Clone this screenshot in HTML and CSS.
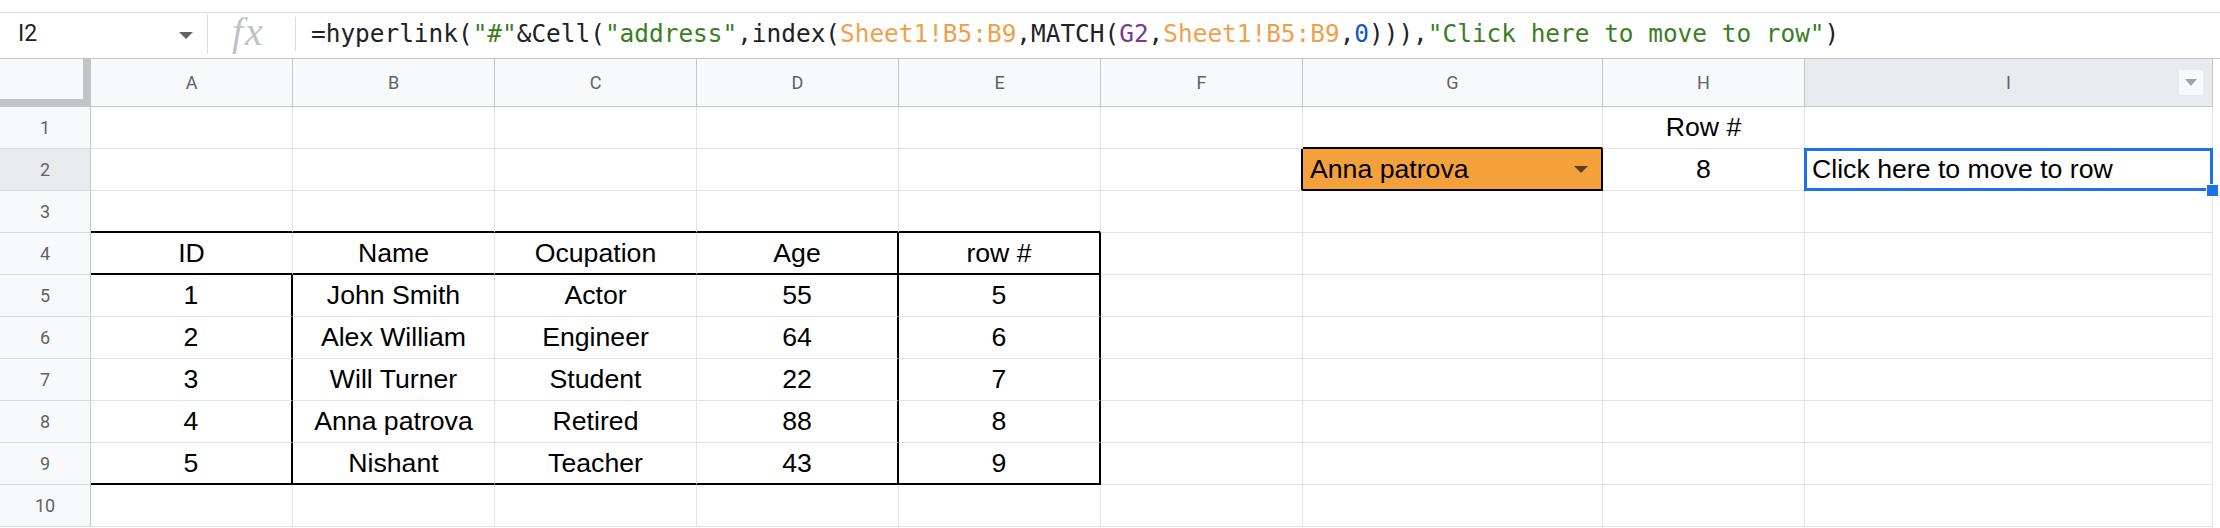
FILE: index.html
```html
<!DOCTYPE html>
<html lang="en">
<head>
    <meta charset="UTF-8">
    <title>Sheet1</title>
    <link rel="stylesheet" href="styles.css">
</head>
<body>
    <div class="top"></div>

    <div class="formula-bar">
        <div class="name-box">
            <span>I2</span>
            <span class="caret"></span>
        </div>
        <div class="fx">fx</div>
        <div class="formula">=hyperlink(<span class="str">"#"</span>&amp;Cell(<span class="str">"address"</span>,index(<span class="rng">Sheet1!B5:B9</span>,MATCH(<span class="ref">G2</span>,<span class="rng">Sheet1!B5:B9</span>,<span class="num">0</span>))),<span class="str">"Click here to move to row"</span>)</div>
    </div>

    <div class="sheet">
        <div class="row head">
            <div class="corner"></div>
            <div class="ch">A</div>
            <div class="ch">B</div>
            <div class="ch">C</div>
            <div class="ch">D</div>
            <div class="ch">E</div>
            <div class="ch">F</div>
            <div class="ch">G</div>
            <div class="ch">H</div>
            <div class="ch sel filter-col">
                <span></span>
                <span>I</span>
                <span class="filter"><i></i></span>
            </div>
            <div class="rest"></div>
        </div>

        <div class="row">
            <div class="rh">1</div>
            <div class="c"></div><div class="c"></div><div class="c"></div><div class="c"></div><div class="c"></div>
            <div class="c"></div>
            <div class="c kb"></div>
            <div class="c ctr">Row #</div>
            <div class="c"></div>
            <div class="rest"></div>
        </div>

        <div class="row">
            <div class="rh sel">2</div>
            <div class="c"></div><div class="c"></div><div class="c"></div><div class="c"></div><div class="c"></div>
            <div class="c kr"></div>
            <div class="c kb kr pick">
                <span>Anna patrova</span>
                <span class="pick-arrow"></span>
            </div>
            <div class="c ctr">8</div>
            <div class="c active">Click here to move to row<span class="handle"></span></div>
            <div class="rest"></div>
        </div>

        <div class="row">
            <div class="rh">3</div>
            <div class="c kb"></div><div class="c kb"></div><div class="c kb"></div><div class="c kb"></div><div class="c kb"></div>
            <div class="c"></div><div class="c"></div><div class="c"></div><div class="c"></div>
            <div class="rest"></div>
        </div>

        <div class="row">
            <div class="rh">4</div>
            <div class="c ctr kb">ID</div>
            <div class="c ctr kb">Name</div>
            <div class="c ctr kb">Ocupation</div>
            <div class="c ctr kb kr">Age</div>
            <div class="c ctr kb kr">row #</div>
            <div class="c"></div><div class="c"></div><div class="c"></div><div class="c"></div>
            <div class="rest"></div>
        </div>

        <div class="row">
            <div class="rh">5</div>
            <div class="c ctr kr">1</div>
            <div class="c ctr">John Smith</div>
            <div class="c ctr">Actor</div>
            <div class="c ctr kr">55</div>
            <div class="c ctr kr">5</div>
            <div class="c"></div><div class="c"></div><div class="c"></div><div class="c"></div>
            <div class="rest"></div>
        </div>

        <div class="row">
            <div class="rh">6</div>
            <div class="c ctr kr">2</div>
            <div class="c ctr">Alex William</div>
            <div class="c ctr">Engineer</div>
            <div class="c ctr kr">64</div>
            <div class="c ctr kr">6</div>
            <div class="c"></div><div class="c"></div><div class="c"></div><div class="c"></div>
            <div class="rest"></div>
        </div>

        <div class="row">
            <div class="rh">7</div>
            <div class="c ctr kr">3</div>
            <div class="c ctr">Will Turner</div>
            <div class="c ctr">Student</div>
            <div class="c ctr kr">22</div>
            <div class="c ctr kr">7</div>
            <div class="c"></div><div class="c"></div><div class="c"></div><div class="c"></div>
            <div class="rest"></div>
        </div>

        <div class="row">
            <div class="rh">8</div>
            <div class="c ctr kr">4</div>
            <div class="c ctr">Anna patrova</div>
            <div class="c ctr">Retired</div>
            <div class="c ctr kr">88</div>
            <div class="c ctr kr">8</div>
            <div class="c"></div><div class="c"></div><div class="c"></div><div class="c"></div>
            <div class="rest"></div>
        </div>

        <div class="row">
            <div class="rh">9</div>
            <div class="c ctr kr kb">5</div>
            <div class="c ctr kb">Nishant</div>
            <div class="c ctr kb">Teacher</div>
            <div class="c ctr kr kb">43</div>
            <div class="c ctr kr kb">9</div>
            <div class="c"></div><div class="c"></div><div class="c"></div><div class="c"></div>
            <div class="rest"></div>
        </div>

        <div class="row">
            <div class="rh">10</div>
            <div class="c"></div><div class="c"></div><div class="c"></div><div class="c"></div><div class="c"></div>
            <div class="c"></div><div class="c"></div><div class="c"></div><div class="c"></div>
            <div class="rest"></div>
        </div>
    </div>
</body>
</html>
```

FILE: styles.css
```css
:root {
    --cols: 91px repeat(6, 202px) 300px 202px 408px 1fr;
    --grid: #e2e3e3;
    --head-line: #c4c7c5;
    --head-bg: #f8f9fa;
    --head-sel: #e8eaed;
    --head-text: #5f6368;
    --blue: #1a73e8;
}

* {
    box-sizing: border-box;
}

body {
    margin: 0;
    background: #fff;
    color: #000;
    font-family: "Liberation Sans", Arial, sans-serif;
    overflow: hidden;
}

.top {
    height: 13px;
    border-bottom: 1px solid #dadce0;
}

/* formula bar */
.formula-bar {
    display: flex;
    align-items: center;
    height: 46px;
    padding-bottom: 4px;
    border-bottom: 1px solid var(--head-line);
}

.name-box {
    display: flex;
    align-items: center;
    justify-content: space-between;
    width: 208px;
    height: 40px;
    padding: 0 14px 0 18px;
    border-right: 1px solid #dadce0;
    font-family: Roboto, "Liberation Sans", sans-serif;
    font-size: 23px;
    color: #202124;
}

.caret {
    width: 0;
    height: 0;
    margin-top: 3px;
    border-left: 7px solid transparent;
    border-right: 7px solid transparent;
    border-top: 7px solid #5f6368;
}

.fx {
    width: 88px;
    height: 34px;
    padding-left: 24px;
    border-right: 1px solid #dadce0;
    font-family: "Liberation Serif", "Times New Roman", serif;
    font-style: italic;
    font-size: 40px;
    line-height: 30px;
    letter-spacing: 2px;
    color: #c0c2c5;
}

.formula {
    padding-left: 15px;
    font-family: "DejaVu Sans Mono", "Liberation Mono", monospace;
    font-size: 24.42px;
    color: #202124;
    white-space: nowrap;
}

.str { color: #3b7d23; }
.rng { color: #f0a04b; }
.ref { color: #7e3794; }
.num { color: #1155cc; }

/* grid */
.row {
    display: grid;
    grid-template-columns: var(--cols);
    height: 42px;
}

.row.head {
    height: 48px;
}

.corner {
    background: var(--head-bg);
    border-right: 8px solid #c2c4c6;
    border-bottom: 8px solid #c2c4c6;
}

.ch {
    display: flex;
    align-items: center;
    justify-content: center;
    background: var(--head-bg);
    border-right: 1px solid var(--head-line);
    border-bottom: 1px solid var(--head-line);
    font-family: Roboto, "Liberation Sans", sans-serif;
    font-size: 18px;
    color: var(--head-text);
}

.rh {
    display: flex;
    align-items: center;
    justify-content: center;
    background: var(--head-bg);
    border-right: 1px solid var(--head-line);
    border-bottom: 1px solid #dadce0;
    font-family: Roboto, "Liberation Sans", sans-serif;
    font-size: 18px;
    color: var(--head-text);
}

.sel {
    background: var(--head-sel);
}

.filter-col {
    display: grid;
    grid-template-columns: 1fr auto 1fr;
    align-items: center;
    justify-items: center;
}

.filter {
    justify-self: end;
    display: flex;
    align-items: center;
    justify-content: center;
    width: 24px;
    height: 25px;
    margin-right: 9px;
    background: #f8f9fa;
    border-radius: 2px;
}

.filter i {
    width: 0;
    height: 0;
    border-left: 6px solid transparent;
    border-right: 6px solid transparent;
    border-top: 7px solid #a0a4a8;
}

.c {
    display: flex;
    align-items: center;
    padding: 0 7px;
    border-right: 1px solid var(--grid);
    border-bottom: 1px solid var(--grid);
    font-size: 26.67px;
    white-space: nowrap;
}

.ctr {
    justify-content: center;
}

.kb {
    border-bottom: 2px solid #000;
}

.kr {
    border-right: 2px solid #000;
}

.pick {
    justify-content: space-between;
    padding-right: 13px;
    background: #f4a03b;
}

.pick-arrow {
    width: 0;
    height: 0;
    border-left: 7px solid transparent;
    border-right: 7px solid transparent;
    border-top: 7px solid rgba(0, 0, 0, 0.6);
}

.active {
    position: relative;
}

.active::after {
    content: "";
    position: absolute;
    left: -1px;
    top: -1px;
    right: -1px;
    bottom: -1px;
    border: 3px solid var(--blue);
    pointer-events: none;
}

.handle {
    position: absolute;
    right: -7px;
    bottom: -7px;
    width: 13px;
    height: 13px;
    background: var(--blue);
    border: 1px solid #fff;
    z-index: 1;
}

.rest {
    background: #fff;
}
```
